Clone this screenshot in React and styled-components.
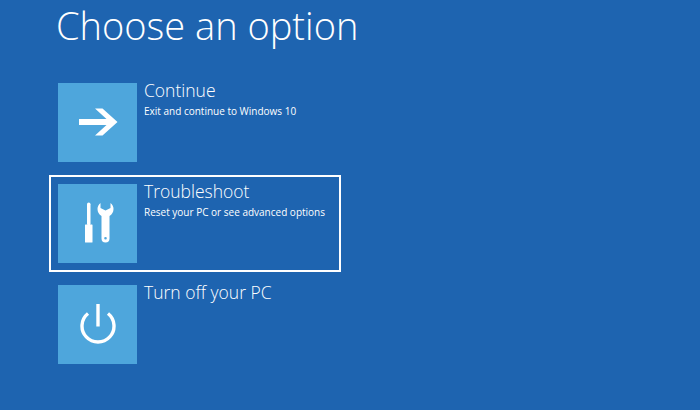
import styled, { createGlobalStyle } from 'styled-components';

const GlobalStyle = createGlobalStyle`
  html, body {
    margin: 0;
    padding: 0;
    background: #1e64b0;
  }
`;

const Page = styled.div`
  width: 700px;
  height: 410px;
  box-sizing: border-box;
  overflow: hidden;
  padding-left: 49px;
  background: #1e64b0;
  color: #fff;
  font-family: "Open Sans", "Liberation Sans", sans-serif;
`;

const Title = styled.h1`
  margin: 0 0 22px 7px;
  height: 52px;
  font-size: 38px;
  line-height: 51px;
  font-weight: 300;
`;

const Options = styled.div`
  display: flex;
  flex-direction: column;
  gap: 4px;
`;

const Option = styled.div`
  width: 292px;
  height: 97px;
  box-sizing: border-box;
  padding: 9px;
  display: flex;
  gap: 7px;
  outline: ${props => (props.$selected ? '2px solid #fff' : 'none')};
  outline-offset: -2px;
`;

const Tile = styled.div`
  width: 79px;
  height: 79px;
  flex: none;
  display: flex;
  align-items: center;
  justify-content: center;
  background: #4ea6dc;
`;

const Text = styled.div`
  display: flex;
  flex-direction: column;
  margin-top: -1px;
`;

const Name = styled.div`
  font-size: 17.5px;
  line-height: 17px;
  font-weight: 300;
  white-space: nowrap;
`;

const Description = styled.div`
  margin-top: 5px;
  font-size: 10px;
  line-height: 14px;
  white-space: nowrap;
`;

const ArrowIcon = () => (
  <svg width="40" height="40" viewBox="0 0 40 40" fill="#fff">
    <path d="M17 5.5H24.5L39.5 19L24.5 32.5H17L28.5 22H1V16H28.5Z" />
  </svg>
);

const ToolsIcon = () => (
  <svg width="40" height="44" viewBox="0 0 40 44" fill="#fff">
    <rect x="9" y="0.5" width="3.5" height="23" rx="1.75" />
    <rect x="7" y="22.5" width="7.5" height="18" rx="0.5" />
    <path
      fillRule="evenodd"
      d="M22.5 1C20.5 2.5 19.5 4.5 19.5 7C19.5 10 21 12.5 23.5 14V36.5A4 4 0 0 0 31.5 36.5V14C34 12.5 35.5 10 35.5 7C35.5 4.5 34.5 2.5 32.5 1V6L27.5 8.5L22.5 6ZM27.5 34.9A1.3 1.3 0 1 0 27.5 37.5A1.3 1.3 0 1 0 27.5 34.9Z"
    />
  </svg>
);

const PowerIcon = () => (
  <svg width="36" height="42" viewBox="0 0 36 42" fill="none" stroke="#fff" strokeWidth="3.4">
    <path d="M18 0V22.5" />
    <path d="M8 9.5A16 16 0 1 0 28 9.5" />
  </svg>
);

const options = [
  { name: 'Continue', description: 'Exit and continue to Windows 10', Icon: ArrowIcon },
  { name: 'Troubleshoot', description: 'Reset your PC or see advanced options', Icon: ToolsIcon, selected: true },
  { name: 'Turn off your PC', Icon: PowerIcon },
];

const App = () => (
  <Page>
    <GlobalStyle />
    <Title>Choose an option</Title>
    <Options>
      {options.map(({ name, description, Icon, selected }) => (
        <Option key={name} $selected={selected}>
          <Tile>
            <Icon />
          </Tile>
          <Text>
            <Name>{name}</Name>
            {description && <Description>{description}</Description>}
          </Text>
        </Option>
      ))}
    </Options>
  </Page>
);

export default App;
